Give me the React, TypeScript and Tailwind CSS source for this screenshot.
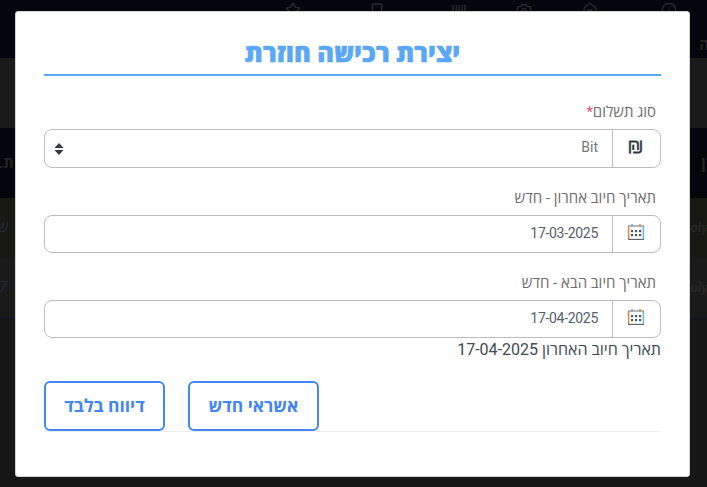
import { Camera, Home, Star, Info, Barcode, Bookmark } from "lucide-react";

const font = { fontFamily: 'Roboto, "Open Sans", "Noto Sans", "Liberation Sans", sans-serif' };

function ShekelIcon() {
  const paths = (
    <>
      <path d="M1.5 13.5V1.5H7a2.5 2.5 0 0 1 2.5 2.5V10" />
      <path d="M4.8 10V4.8M4.8 12.5H10a2.5 2.5 0 0 0 2.5-2.5V0.5" />
    </>
  );
  return (
    <svg width="15" height="14" viewBox="0 0 14 14" fill="none" strokeWidth="1.8" className="mb-[4px] mr-[2px]">
      <g stroke="#d09a62" transform="translate(-0.5 0)">{paths}</g>
      <g stroke="#6fb0e8" transform="translate(0.5 0)">{paths}</g>
      <g stroke="#333333" strokeWidth="1.4">{paths}</g>
    </svg>
  );
}

function CalendarIcon() {
  return (
    <svg width="18" height="18" viewBox="0 0 18 18" fill="none" strokeWidth="1.5" className="mb-[4px] mr-[1px]">
      <path d="M1.6 2.8V16.4" stroke="#c98a4b" />
      <path d="M16.4 2.8V16.4" stroke="#6fb0e8" />
      <path d="M1 3H17" stroke="#8a8a8a" strokeWidth="1.2" />
      <path d="M1 16.4H17" stroke="#666" strokeWidth="1.2" />
      <path d="M5 1V4" stroke="#6fa8d8" />
      <path d="M13 1V4" stroke="#c98a4b" />
      <g fill="#4a5560">
        <rect x="4" y="7" width="2.2" height="2.2" />
        <rect x="8" y="7" width="2.2" height="2.2" />
        <rect x="12" y="7" width="2.2" height="2.2" />
        <rect x="4" y="11" width="2.2" height="2.2" />
        <rect x="8" y="11" width="2.2" height="2.2" />
        <rect x="12" y="11" width="2.2" height="2.2" />
      </g>
    </svg>
  );
}

function SortIcon() {
  return (
    <svg width="10" height="14" viewBox="0 0 10 14" fill="#343a40">
      <path d="M5 1 9.5 6H0.5Z" />
      <path d="M5 13 0.5 8h9Z" />
    </svg>
  );
}

function DateField({ label, value }: { label: string; value: string }) {
  return (
    <div>
      <label className="block h-[20px] pr-[5px] text-[15px] leading-[22px] text-[#6e6e6e]">{label}</label>
      <div className="mt-[8px] flex h-[38px] rounded-[8px] border border-[#bdbdbd] bg-white">
        <div className="flex w-[48px] shrink-0 items-center justify-center border-l border-[#bdbdbd]">
          <CalendarIcon />
        </div>
        <div className="flex flex-1 items-center pb-[2px] pr-[14px] text-[14px] tracking-[-0.3px] text-[#55606c]">
          <span dir="ltr">{value}</span>
        </div>
      </div>
    </div>
  );
}

function Band({ className, left, right }: { className: string; left?: React.ReactNode; right?: React.ReactNode }) {
  return (
    <div dir="ltr" className={`flex items-center justify-between overflow-hidden ${className}`}>
      <div className="shrink-0">{left}</div>
      <div className="shrink-0">{right}</div>
    </div>
  );
}

export default function App() {
  return (
    <div dir="rtl" className="relative h-[487px] w-[707px] overflow-hidden bg-[#171717]" style={font}>
      <div dir="ltr" className="relative h-[58px] bg-[#05060b] text-[#2a2c31]">
        <div className="flex pl-[285px] pt-[2px]">
          <Star size={16} />
          <Bookmark size={16} className="ml-[68px]" />
          <Barcode size={16} className="ml-[66px]" />
          <Camera size={16} className="ml-[49px]" />
          <Home size={16} className="ml-[50px]" />
          <Info size={16} className="ml-[63px]" />
        </div>
        <div className="flex justify-end pt-[16px] text-[15px] font-bold text-[#242426]">
          <span dir="rtl" className="mr-[-2px]">ה</span>
        </div>
      </div>
      <Band className="h-[70px] bg-[#1a1a1a]" />
      <Band
        className="h-[70px] bg-[#05060b] text-[15px] font-bold text-[#26231f]"
        left={<span className="ml-[-1px]">.ת</span>}
        right={<span className="mr-[-3px]">ין</span>}
      />
      <Band
        className="h-[59px] bg-[#191913] text-[15px] text-[#252a3a]"
        left={<span className="ml-[-2px]">ש</span>}
        right={<span className="mr-[-1px] font-serif italic text-[#2b2b27]">poly</span>}
      />
      <Band
        className="h-[61px] border-b border-[#14182e] bg-[#1a1a1a] text-[15px] text-[#252a3a]"
        left={<span className="ml-[-1px] italic">7</span>}
        right={<span className="mr-[-1px] font-serif italic text-[#2b2b27]">poly</span>}
      />

      <div className="absolute left-[15px] top-[11px] h-[466px] w-[675px] rounded-[3px] border border-[#d4d4d4] bg-white px-[28px] pt-[22px]">
        <h2 className="border-b-[2px] border-[#5aa7f5] pb-[2px] text-center text-[25.5px] font-extrabold leading-[38px] text-[#5aa7f5] [-webkit-text-stroke:0.5px_#5aa7f5]">
          יצירת רכישה חוזרת
        </h2>

        <div className="mt-[25px]">
          <label className="block h-[20px] pr-[5px] text-[15px] leading-[22px] text-[#6e6e6e]">
            סוג תשלום<span className="text-[#f0447a]">*</span>
          </label>
          <div className="mt-[8px] flex h-[39px] rounded-[8px] border border-[#bdbdbd] bg-white">
            <div className="flex w-[48px] shrink-0 items-center justify-center border-l border-[#bdbdbd]">
              <ShekelIcon />
            </div>
            <div className="flex flex-1 items-center justify-between pl-[9px] pr-[14px] text-[14px] text-[#777]">
              <span className="mb-[3px]">Bit</span>
              <SortIcon />
            </div>
          </div>
        </div>

        <div className="mt-[19px]">
          <DateField label="תאריך חיוב אחרון - חדש" value="17-03-2025" />
        </div>
        <div className="mt-[19px]">
          <DateField label="תאריך חיוב הבא - חדש" value="17-04-2025" />
        </div>

        <p className="text-[16px] leading-[24px] text-[#3f4a55]">תאריך חיוב האחרון 17-04-2025</p>

        <div className="mt-[19px] flex justify-end gap-[23px] border-b border-[#eeeeee]">
          <button className="h-[50px] w-[131px] rounded-[6px] border-2 border-[#4285f4] text-[17.5px] font-bold text-[#4285f4]">
            אשראי חדש
          </button>
          <button className="h-[50px] w-[121px] rounded-[6px] border-2 border-[#4285f4] text-[17.5px] font-bold text-[#4285f4]">
            דיווח בלבד
          </button>
        </div>
      </div>
    </div>
  );
}
